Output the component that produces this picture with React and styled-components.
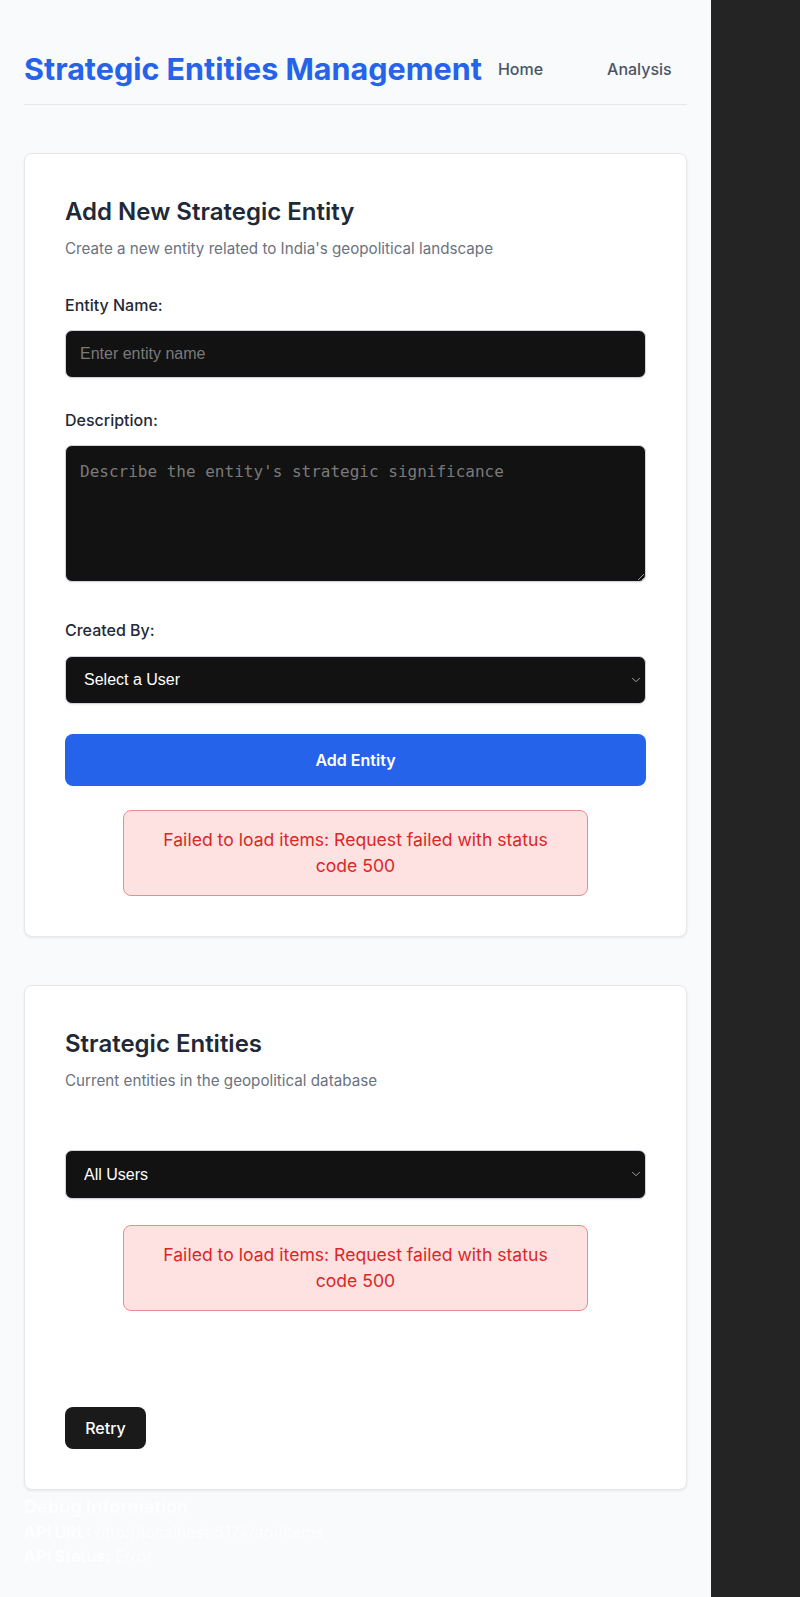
import React from 'react';
import styled, { createGlobalStyle } from 'styled-components';
import { ChevronDown } from 'lucide-react';

const GlobalStyle = createGlobalStyle`
  body {
    margin: 0;
    background-color: #242424;
    color: rgba(255, 255, 255, 0.87);
    font-family: Inter, "Liberation Sans", sans-serif;
    line-height: 1.5;
  }
`;

const Page = styled.div`
  width: 711px;
  min-height: 1597px;
  box-sizing: border-box;
  padding: 0 24px;
  background-color: #f8fafc;
`;

const Header = styled.header`
  display: flex;
  justify-content: space-between;
  align-items: center;
  padding: 46px 0 12px;
  border-bottom: 1px solid #e5e7eb;
`;

const Title = styled.h1`
  margin: 0;
  font: 700 30.5px Inter, sans-serif;
  line-height: 1.5;
  color: #2563eb;
  white-space: nowrap;
`;

const Nav = styled.nav`
  display: flex;
  gap: 32px;
`;

const NavLink = styled.a`
  padding: 8px 16px;
  font: 500 16px Inter, sans-serif;
  line-height: 1.5;
  color: #4b5563;
  text-decoration: none;
`;

const Card = styled.section`
  margin-top: ${(p) => p.$gap}px;
  padding: 40px;
  background: #ffffff;
  border: 1px solid #e5e7eb;
  border-radius: 8px;
  box-shadow: 0 1px 3px rgba(0, 0, 0, 0.08);
`;

const CardHead = styled.div`
  margin-bottom: ${(p) => p.$space}px;
`;

const CardTitle = styled.h2`
  margin: 0;
  font: 600 24px Inter, sans-serif;
  line-height: 1.5;
  color: #1f2937;
`;

const CardSubtitle = styled.p`
  margin: 8px 0 0;
  font: 400 15.2px Inter, sans-serif;
  line-height: 1.5;
  color: #6b7280;
`;

const FormGroup = styled.div`
  margin-bottom: ${(p) => p.$space ?? 29.5}px;
`;

const Label = styled.label`
  display: block;
  margin-bottom: 13.5px;
  font: 500 16px Inter, sans-serif;
  line-height: 1.5;
  color: #1f2937;
`;

const fieldBase = `
  display: block;
  width: 100%;
  box-sizing: border-box;
  background-color: #121212;
  color: #ffffff;
  border: 1px solid #d1d5db;
  border-radius: 7px;
  box-shadow: 0 1px 2px rgba(0, 0, 0, 0.06);
  color-scheme: dark;
  font-size: 16px;
  &::placeholder {
    color: #7a7a7a;
  }
`;

const TextInput = styled.input`
  ${fieldBase}
  height: 48px;
  padding: 0 14px;
  font-family: "Liberation Sans", Arial, sans-serif;
`;

const TextArea = styled.textarea`
  ${fieldBase}
  height: 137px;
  padding: 14px;
  font-family: "DejaVu Sans Mono", monospace;
  line-height: 1.5;
`;

const SelectWrap = styled.div`
  position: relative;
`;

const Select = styled.select`
  ${fieldBase}
  appearance: none;
  height: 48.5px;
  padding: 0 28px 0 18px;
  font-family: "Liberation Sans", Arial, sans-serif;
`;

const SelectArrow = styled(ChevronDown)`
  position: absolute;
  top: 50%;
  right: 3px;
  transform: translateY(-50%);
  color: #b8b8b8;
  pointer-events: none;
`;

const SubmitButton = styled.button`
  display: block;
  width: 100%;
  padding: 16px;
  border: none;
  border-radius: 8px;
  background-color: #2563eb;
  color: #ffffff;
  font: 600 16px Inter, sans-serif;
  cursor: pointer;
`;

const ErrorBox = styled.div`
  width: 80%;
  box-sizing: border-box;
  margin: ${(p) => p.$top}px auto 0;
  padding: 16px;
  background-color: #fee2e2;
  border: 1px solid #ec8a8a;
  border-radius: 8px;
  color: #dc2626;
  font: 400 17.6px Inter, sans-serif;
  line-height: 1.5;
  text-align: center;
`;

const RetryButton = styled.button`
  display: block;
  margin-top: 96px;
  padding: 0.6em 1.2em;
  border: 1px solid transparent;
  border-radius: 8px;
  background-color: #1a1a1a;
  color: #ffffff;
  font: 500 16px Inter, sans-serif;
  cursor: pointer;
`;

const Debug = styled.div`
  margin-top: 3px;
  color: rgba(255, 255, 255, 0.87);
  font: 400 16px Inter, sans-serif;
  line-height: 1.5;

  h3 {
    margin: 0;
    font-size: 18px;
    font-weight: 700;
  }

  p {
    margin: 0;
  }
`;

const UserSelect = ({ placeholder }) => (
  <SelectWrap>
    <Select defaultValue="">
      <option value="">{placeholder}</option>
    </Select>
    <SelectArrow size={14} strokeWidth={1.5} />
  </SelectWrap>
);

const App = () => {
  const error = 'Failed to load items: Request failed with status code 500';

  return (
    <Page>
      <GlobalStyle />
      <Header>
        <Title>Strategic Entities Management</Title>
        <Nav>
          <NavLink href="#">Home</NavLink>
          <NavLink href="#">Analysis</NavLink>
        </Nav>
      </Header>

      <Card $gap={48}>
        <CardHead $space={32}>
          <CardTitle>Add New Strategic Entity</CardTitle>
          <CardSubtitle>Create a new entity related to India's geopolitical landscape</CardSubtitle>
        </CardHead>
        <FormGroup>
          <Label>Entity Name:</Label>
          <TextInput placeholder="Enter entity name" />
        </FormGroup>
        <FormGroup $space={36}>
          <Label>Description:</Label>
          <TextArea placeholder="Describe the entity's strategic significance" />
        </FormGroup>
        <FormGroup>
          <Label>Created By:</Label>
          <UserSelect placeholder="Select a User" />
        </FormGroup>
        <SubmitButton>Add Entity</SubmitButton>
        <ErrorBox $top={24}>{error}</ErrorBox>
      </Card>

      <Card $gap={48}>
        <CardHead $space={57}>
          <CardTitle>Strategic Entities</CardTitle>
          <CardSubtitle>Current entities in the geopolitical database</CardSubtitle>
        </CardHead>
        <UserSelect placeholder="All Users" />
        <ErrorBox $top={26}>{error}</ErrorBox>
        <RetryButton>Retry</RetryButton>
      </Card>

      <Debug>
        <h3>Debug Information</h3>
        <p><strong>API URL:</strong> http://localhost:5174/api/items</p>
        <p><strong>API Status:</strong> Error</p>
      </Debug>
    </Page>
  );
};

export default App;
